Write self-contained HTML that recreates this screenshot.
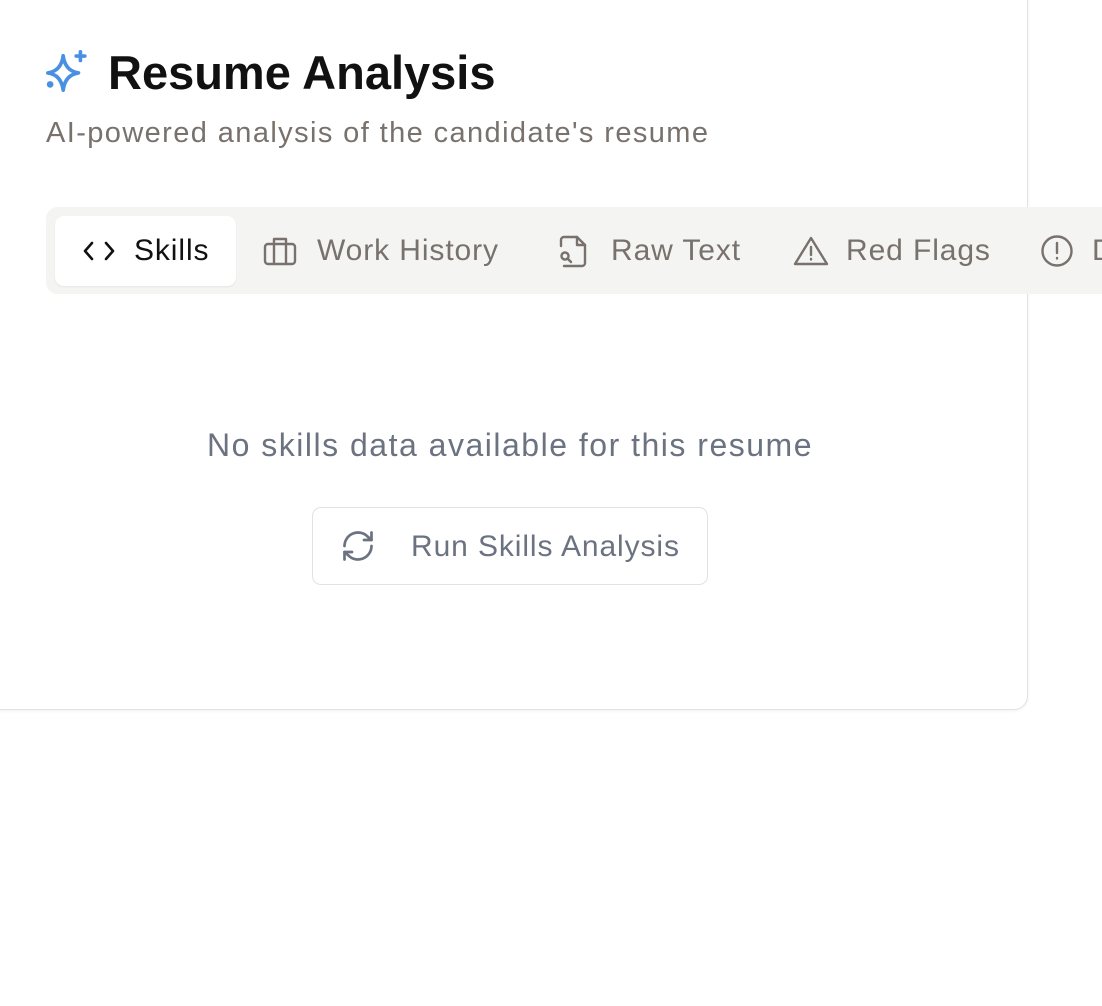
<!DOCTYPE html>
<html><head><meta charset="utf-8"><style>
html,body{margin:0;padding:0;width:1102px;height:1006px;background:#fff;overflow:hidden;font-family:"Liberation Sans",sans-serif;}
.card{position:absolute;left:-14px;top:-30px;width:1040px;height:738px;border:1.5px solid #e2e2e2;border-radius:14px;box-shadow:0 1px 3px rgba(0,0,0,.06);background:#fff;}
.abs{position:absolute;white-space:nowrap;}
.tabs{position:absolute;left:46px;top:207px;width:1100px;height:87px;background:#f4f4f3;border-radius:12px;}
.active{position:absolute;left:55px;top:216px;width:181px;height:70px;background:#fff;border-radius:9px;box-shadow:0 1px 2px rgba(0,0,0,.06);}
.tab{position:absolute;top:233px;font-size:30px;letter-spacing:0.9px;color:#78716c;line-height:36px;}
svg{position:absolute;}
</style></head><body>
<div class="card"></div>
<svg style="left:44px;top:48px" width="46" height="46" viewBox="0 0 24 24" fill="none" stroke="#4a90e2" stroke-width="1.9" stroke-linecap="round" stroke-linejoin="round"><path d="M10 4Q11 12 18 13Q11 14 10 22Q9 14 2 13Q9 12 10 4z"/><path d="M19 2v4.5M16.8 4.2h4.5"/><circle cx="3.2" cy="19" r=".8" fill="#4a90e2"/></svg>
<div class="abs" style="left:108px;top:44px;font-size:47px;font-weight:bold;color:#111;letter-spacing:0;line-height:58px">Resume Analysis</div>
<div class="abs" style="left:46px;top:116px;font-size:29px;letter-spacing:1.4px;color:#78716c;line-height:34px">AI-powered analysis of the candidate's resume</div>
<div class="tabs"></div>
<div class="active"></div>
<svg style="left:82px;top:238px" width="34" height="26" viewBox="0 0 34 26" fill="none" stroke="#111" stroke-width="2.6" stroke-linecap="round" stroke-linejoin="round"><path d="M10 5l-7 8 7 8M24 5l7 8-7 8"/></svg>
<div class="tab" style="left:134px;color:#111">Skills</div>
<svg style="left:263px;top:236px" width="34" height="30" viewBox="0 0 34 30" fill="none" stroke="#78716c" stroke-width="2.4" stroke-linejoin="round"><rect x="2" y="8" width="30" height="20" rx="3"/><path d="M11 8V3h12v5M11 8v20M23 8v20"/></svg>
<div class="tab" style="left:317px">Work History</div>
<svg style="left:557px;top:234px" width="34" height="34" viewBox="0 0 34 34" fill="none" stroke="#78716c" stroke-width="2.4" stroke-linecap="round" stroke-linejoin="round"><path d="M4 12V6a3 3 0 013-3h13l8 8v18a3 3 0 01-3 3H7"/><path d="M20 3v8h8"/><circle cx="8" cy="22" r="3.5"/><path d="M11 25l3 3"/></svg>
<div class="tab" style="left:611px">Raw Text</div>
<svg style="left:793px;top:235px" width="36" height="32" viewBox="0 0 36 32" fill="none" stroke="#78716c" stroke-width="2.4" stroke-linecap="round" stroke-linejoin="round"><path d="M18 3L2 29h32z"/><path d="M18 12v8M18 24v.5"/></svg>
<div class="tab" style="left:846px">Red Flags</div>
<svg style="left:1040px;top:234px" width="34" height="34" viewBox="0 0 34 34" fill="none" stroke="#78716c" stroke-width="2.4" stroke-linecap="round"><circle cx="17" cy="17" r="14.5"/><path d="M17 9v10M17 24v.5"/></svg>
<div class="tab" style="left:1092px">D</div>
<div class="abs" style="left:0;width:1020px;text-align:center;top:426px;font-size:32px;letter-spacing:1.5px;color:#6b7280;line-height:38px">No skills data available for this resume</div>
<div class="abs" style="left:312px;top:507px;width:394px;height:76px;border:1.5px solid #e2e2e2;border-radius:9px;background:#fff"></div>
<svg style="left:340px;top:528px" width="36" height="36" viewBox="0 0 24 24" fill="none" stroke="#6b7280" stroke-width="1.8" stroke-linecap="round" stroke-linejoin="round"><path d="M3 12a9 9 0 0115.5-6.2L21 8"/><path d="M21 3v5h-5"/><path d="M21 12a9 9 0 01-15.5 6.2L3 16"/><path d="M3 21v-5h5"/></svg>
<div class="abs" style="left:411px;top:529px;font-size:30px;letter-spacing:0.9px;color:#6b7280;line-height:36px">Run Skills Analysis</div>
</body></html>
